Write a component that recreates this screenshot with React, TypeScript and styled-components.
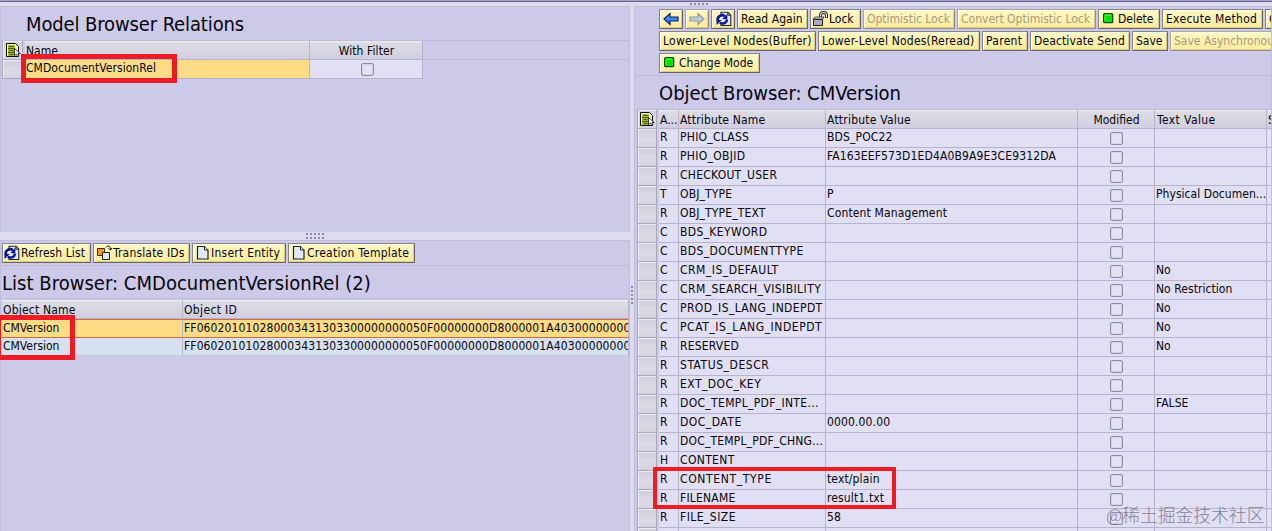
import React from "react";
import styled, { createGlobalStyle, css } from "styled-components";

const Global = createGlobalStyle`
  html, body { margin: 0; padding: 0; }
  body {
    width: 1272px; height: 531px; overflow: hidden; background: #cdc9e9; color: #05050c;
    font: 12px/14px "DejaVu Sans Condensed", "DejaVu Sans", sans-serif;
    font-stretch: condensed;
  }
  * { box-sizing: border-box; }
`;

const Screen = styled.div`
  position: relative;
  width: 1272px;
  height: 531px;
  display: flex;
  flex-direction: column;
  overflow: hidden;
`;
const TopEdge = styled.div`
  flex: none;
  height: 6px;
  border-top: 1px solid #a5a0cc;
  background: linear-gradient(#66648f 0 1px, #dddbed 1px 100%);
`;
const Columns = styled.div`
  flex: 1;
  min-height: 0;
  display: grid;
  grid-template-columns: 630px 4px 638px;
`;
const LeftSide = styled.div`
  display: grid;
  grid-template-rows: 226px 8px 291px;
  min-width: 0;
`;
const Pane = styled.section`
  border: 1px solid #c1bddc;
  border-width: 1px 1px 0 1px;
  min-width: 0;
  overflow: hidden;
`;
const HSplitter = styled.div`
  background: #dddbed;
  display: flex;
  align-items: center;
  justify-content: center;
`;
const VSplitter = styled(HSplitter)`
  padding-top: 52px;
`;
const DotGrid = styled.div<{ $w: number; $h: number }>`
  width: ${(p) => p.$w}px;
  height: ${(p) => p.$h}px;
  background: repeating-linear-gradient(90deg, transparent 0 2px, #dddbed 2px 4px),
    repeating-linear-gradient(#8f8cab 0 2px, #dddbed 2px 4px);
`;
const TopGrip = styled.div`
  position: absolute;
  left: 690px;
  top: 3px;
`;

const Title = styled.h1<{ $pad: string; $height: number; $track: number }>`
  margin: 0;
  height: ${(p) => p.$height}px;
  padding: ${(p) => p.$pad};
  font-size: 20px;
  line-height: 24px;
  font-weight: 400;
  letter-spacing: ${(p) => p.$track}px;
  white-space: nowrap;
  border-bottom: 1px solid #bfbbdb;
`;

const Toolbar = styled.div<{ $pad: string; $height: number }>`
  height: ${(p) => p.$height}px;
  padding: ${(p) => p.$pad};
  display: flex;
  flex-direction: column;
  gap: 2px;
  border-bottom: 1px solid #bfbbdb;
`;
const ButtonRow = styled.div`
  display: flex;
  gap: 2px;
`;
const Btn = styled.button<{ $w: number; $off?: boolean; $gap?: number; $left?: number; $track?: number }>`
  flex: none;
  width: ${(p) => p.$w}px;
  height: 20px;
  padding: 0 0 1px ${(p) => p.$left ?? 3}px;
  display: flex;
  align-items: center;
  gap: ${(p) => p.$gap ?? 1}px;
  font: inherit;
  letter-spacing: ${(p) => p.$track ?? 0}px;
  white-space: nowrap;
  overflow: hidden;
  border: 1px solid;
  border-color: #85848c #66656a #66656a #85848c;
  box-shadow: inset 1px 1px #fffce0, inset -1px -1px #d9cc85;
  background: linear-gradient(#fff8c6, #fdeb9c);
  color: #05050c;
  ${(p) =>
    p.$off &&
    css`
      color: #a29d80;
      border-color: #aaa89f #918f88 #918f88 #aaa89f;
    `}
  svg { flex: none; }
`;

const headFill = css`
  background: linear-gradient(#f1f0f5 0, #dcdbe4 2px, #d6d5e1 60%, #d0cee0);
`;
const Row = styled.div<{ $h: number }>`
  display: flex;
  height: ${(p) => p.$h}px;
`;
const Cell = styled.div<{
  $w: number;
  $head?: boolean;
  $bg?: string;
  $line?: string;
  $under?: string;
  $over?: string;
  $pl?: number;
  $pt?: number;
  $center?: boolean;
  $track?: number;
}>`
  flex: none;
  width: ${(p) => p.$w}px;
  height: 100%;
  padding: ${(p) => p.$pt ?? 1}px 0 0 ${(p) => p.$pl ?? 1}px;
  letter-spacing: ${(p) => p.$track ?? 0}px;
  white-space: nowrap;
  overflow: hidden;
  text-align: ${(p) => (p.$center ? "center" : "left")};
  background: ${(p) => p.$bg ?? "transparent"};
  border-right: 1px solid ${(p) => p.$line ?? "#b6b3cb"};
  border-bottom: 1px solid ${(p) => p.$under ?? "#b6b3cb"};
  ${(p) => p.$over && css`border-top: 1px solid ${p.$over};`}
  ${(p) => p.$head && headFill}
`;
const Selector = styled.div<{ $w: number }>`
  flex: none;
  width: ${(p) => p.$w}px;
  height: 100%;
  margin-right: 2px;
  border: 1px solid #a9a7bb;
  border-width: 0 1px 1px 1px;
  box-shadow: inset 1px 1px #eeedf4;
  background: linear-gradient(#cfcddc, #dbdae4 60%, #d4d3df);
  display: flex;
  align-items: center;
  justify-content: center;
`;
const Check = styled.span`
  display: inline-block;
  vertical-align: top;
  width: 13px;
  height: 13px;
  border: 1px solid #8f8da0;
  border-radius: 2px;
  background: #e3e1f2;
  box-shadow: inset 0 0 0 1px #d4d2e4;
`;
const LeftTable = styled.div<{ $mt?: number }>`
  margin: ${(p) => p.$mt ?? 0}px 0 0 1px;
`;
const AttrTable = styled.div`
  margin: 0 -10px 0 2px;
`;
const Rest = styled.div`
  flex: 1;
  border-bottom: 1px solid #bfbbdb;
`;

const Mark = styled.div<{ $x: number; $y: number; $w: number; $h: number; $t: number }>`
  position: absolute;
  left: ${(p) => p.$x}px;
  top: ${(p) => p.$y}px;
  width: ${(p) => p.$w}px;
  height: ${(p) => p.$h}px;
  border: ${(p) => p.$t}px solid #ed1c24;
`;
const Watermark = styled.div`
  position: absolute;
  left: 1106px;
  top: 501px;
  font: 300 17.8px/26px "Noto Sans CJK SC", sans-serif;
  color: rgba(95, 93, 112, 0.75);
  white-space: nowrap;
`;

const ListIcon = () => (
  <svg width="16" height="16" viewBox="0 0 16 16">
    <path d="M1.500 1.500h9l3 3v10h-12z" fill="#f5f3c0" stroke="#111" />
    <path d="M3 3h7v3H3zM3 7h7v3H3zM3 11h7v3H3z" fill="#9fbe2a" />
    <path d="M3 6.500h7M3 10.500h7M4.500 4.500h4M4.500 8.500h4M4.500 12.500h4" stroke="#4c5c00" />
    <path d="M9.500 6.500v7l2-1.500 1.200 2.500 1.300-.7-1-2.300h2.300z" fill="#fff" stroke="#111" strokeWidth=".8" />
  </svg>
);
const RefreshIcon = () => (
  <svg width="17" height="16" viewBox="0 0 17 16">
    <path d="M6 1.200h7l2.800 2.800v10.500H6z" fill="#dcebf5" stroke="#222" strokeWidth="1.100" />
    <path d="M12.800 1.500v2.700h2.700" fill="none" stroke="#222" />
    <circle cx="7.200" cy="8.200" r="3" fill="#eef4fb" />
    <path d="M2.800 9.500A4.500 4.300 0 0 1 10 5.200" fill="none" stroke="#0a159a" strokeWidth="2.700" />
    <path d="M12.300 3v5.200H7.200z" fill="#0a159a" />
    <path d="M12 8.500A4.600 4.300 0 0 1 4.800 11.800" fill="none" stroke="#0a159a" strokeWidth="2.500" />
    <path d="M1.500 14V9h5.300z" fill="#0a159a" />
  </svg>
);
const ArrowIcon = ({ right, fill, line }: { right?: boolean; fill: string; line: string }) => (
  <svg width="16" height="14" viewBox="0 0 16 14">
    <path
      d="M1 7L7 1.500V5h8v4H7v3.500z"
      fill={fill}
      stroke={line}
      strokeWidth="1.200"
      transform={right ? "translate(16 0) scale(-1 1)" : undefined}
    />
  </svg>
);
const LockIcon = () => (
  <svg width="17" height="16" viewBox="0 0 17 16">
    <path d="M8.500 8V4.500q0-3 3-3t3 3V7" fill="none" stroke="#222" strokeWidth="3" />
    <path d="M8.500 8V4.500q0-3 3-3t3 3V6.500" fill="none" stroke="#eee" strokeWidth="1.100" />
    <path d="M1 8l2-2h9l-1 2z" fill="#e9e9f2" stroke="#222" strokeWidth=".8" />
    <path d="M1.500 8.500h9v6h-9z" fill="#a9a8c8" stroke="#222" />
  </svg>
);
const GreenIcon = () => (
  <svg width="11" height="11" viewBox="0 0 11 11">
    <rect x=".7" y=".7" width="9" height="9" rx="1" fill="#08e100" stroke="#064b06" strokeWidth="1.300" />
    <path d="M2 8V2h6" fill="none" stroke="#55ff4c" />
  </svg>
);
const TranslateIcon = () => (
  <svg width="16" height="16" viewBox="0 0 16 16">
    <path d="M1.500 3.500h7v7h-7z" fill="#f59a0c" stroke="#3a2a10" />
    <path d="M6.500 7.500h7v7h-7z" fill="#d7ecf7" stroke="#222" />
    <path d="M10 2.500q1-2 3-1.500t1.500 4M12.500 3.500l2 1.500 1.300-2" fill="none" stroke="#222" />
  </svg>
);
const PageIcon = () => (
  <svg width="14" height="16" viewBox="0 0 14 16">
    <path d="M1.500 1.500h7l3.500 3.500V14h-10.500z" fill="#dcebf5" stroke="#222" strokeWidth="1.200" />
    <path d="M8.500 1.500V5h3.500" fill="#fff" stroke="#222" />
  </svg>
);

type Attr = { kind: string; name: string; value?: string; text?: string; track?: number };
const attrs: Attr[] = [
  { kind: "R", name: "PHIO_CLASS", value: "BDS_POC22", track: 0.25 },
  { kind: "R", name: "PHIO_OBJID", value: "FA163EEF573D1ED4A0B9A9E3CE9312DA", track: 0.3 },
  { kind: "R", name: "CHECKOUT_USER", track: 0.25 },
  { kind: "T", name: "OBJ_TYPE", value: "P", text: "Physical Documen...", track: 0.15 },
  { kind: "R", name: "OBJ_TYPE_TEXT", value: "Content Management", track: 0.15 },
  { kind: "C", name: "BDS_KEYWORD", track: 0.35 },
  { kind: "C", name: "BDS_DOCUMENTTYPE", track: 0.4 },
  { kind: "C", name: "CRM_IS_DEFAULT", text: "No", track: 0.5 },
  { kind: "C", name: "CRM_SEARCH_VISIBILITY", text: "No Restriction", track: 0.42 },
  { kind: "C", name: "PROD_IS_LANG_INDEPDT", text: "No", track: 0.38 },
  { kind: "C", name: "PCAT_IS_LANG_INDEPDT", text: "No", track: 0.55 },
  { kind: "R", name: "RESERVED", text: "No", track: 0.2 },
  { kind: "R", name: "STATUS_DESCR", track: 0.55 },
  { kind: "R", name: "EXT_DOC_KEY", track: 0.45 },
  { kind: "R", name: "DOC_TEMPL_PDF_INTE...", text: "FALSE", track: 0.33 },
  { kind: "R", name: "DOC_DATE", value: "0000.00.00", track: 0.5 },
  { kind: "R", name: "DOC_TEMPL_PDF_CHNG...", track: 0.18 },
  { kind: "H", name: "CONTENT", track: 0.35 },
  { kind: "R", name: "CONTENT_TYPE", value: "text/plain", track: 0.65 },
  { kind: "R", name: "FILENAME", value: "result1.txt", track: 0.2 },
  { kind: "R", name: "FILE_SIZE", value: "58", track: 0.45 },
];
const blankRow: Attr = { kind: "", name: "" };
const objectId =
  "FF0602010102800034313033" + "000000000" + "50F" + "00000000" + "D8000001A403" + "00000000";
const fill = "#e1dff3";
const amber = "#fddc85";
const rust = "#cf6c3c";

const RelationsPane = () => (
  <Pane>
    <Title $pad="5px 0 0 25px" $height={34} $track={-0.12}>Model Browser Relations</Title>
    <Row $h={19}>
      <LeftTable />
      <Selector $w={21}><ListIcon /></Selector>
      <Cell $w={285} $head $pt={3}>Name</Cell>
      <Cell $w={113} $head $pt={3} $center $track={0.1}>With Filter</Cell>
      <Rest />
    </Row>
    <Row $h={19}>
      <LeftTable />
      <Selector $w={21} />
      <Cell $w={285} $bg={amber} $track={0.05}>CMDocumentVersionRel</Cell>
      <Cell $w={113} $bg={fill} $pt={3} $pl={3} $center><Check /></Cell>
    </Row>
  </Pane>
);

const ListPane = () => (
  <Pane>
    <Toolbar $pad="2px 0 0 1px" $height={25}>
      <ButtonRow>
        <Btn $w={89} $left={0} $track={0.08}><RefreshIcon />Refresh List</Btn>
        <Btn $w={97} $left={2} $track={0.17}><TranslateIcon />Translate IDs</Btn>
        <Btn $w={94} $track={0.25}><PageIcon />Insert Entity</Btn>
        <Btn $w={127} $track={0.24}><PageIcon />Creation Template</Btn>
      </ButtonRow>
    </Toolbar>
    <Title $pad="5px 0 0 1px" $height={33} $track={0.03}>List Browser: CMDocumentVersionRel (2)</Title>
    <LeftTable $mt={1}>
      <Row $h={19}>
        <Cell $w={181} $head $pt={3} $track={0.2}>Object Name</Cell>
        <Cell $w={446} $head $pt={3} $track={0.35}>Object ID</Cell>
      </Row>
      <Row $h={19}>
        <Cell $w={181} $bg={amber} $over={rust} $under={rust}>CMVersion</Cell>
        <Cell $w={446} $bg={amber} $over={rust} $under={rust} $track={0.11}>{objectId}</Cell>
      </Row>
      <Row $h={18}>
        <Cell $w={181} $bg="#d6e0f1" $under="#c5cfe2">CMVersion</Cell>
        <Cell $w={446} $bg="#d6e0f1" $under="#c5cfe2" $track={0.11}>{objectId}</Cell>
      </Row>
    </LeftTable>
  </Pane>
);

const ObjectPane = () => (
  <Pane>
    <Toolbar $pad="2px 0 0 24px" $height={69}>
      <ButtonRow>
        <Btn $w={24}><ArrowIcon fill="#3c8cf0" line="#0b1c66" /></Btn>
        <Btn $w={24} $off><ArrowIcon right fill="#b8cfd8" line="#8d9a9c" /></Btn>
        <Btn $w={24}><RefreshIcon /></Btn>
        <Btn $w={71} $track={0.05}>Read Again</Btn>
        <Btn $w={51} $left={1} $gap={0}><LockIcon />Lock</Btn>
        <Btn $w={92} $off>Optimistic Lock</Btn>
        <Btn $w={139} $off>Convert Optimistic Lock</Btn>
        <Btn $w={62} $left={4} $gap={4}><GreenIcon />Delete</Btn>
        <Btn $w={101} $track={0.3}>Execute Method</Btn>
        <Btn $w={60}>Check</Btn>
      </ButtonRow>
      <ButtonRow>
        <Btn $w={157} $track={0.25}>Lower-Level Nodes(Buffer)</Btn>
        <Btn $w={162} $track={0.2}>Lower-Level Nodes(Reread)</Btn>
        <Btn $w={46} $track={0.3}>Parent</Btn>
        <Btn $w={100} $track={0.12}>Deactivate Send</Btn>
        <Btn $w={36}>Save</Btn>
        <Btn $w={130} $off>Save Asynchronously</Btn>
      </ButtonRow>
      <ButtonRow>
        <Btn $w={101} $left={4} $gap={4}><GreenIcon />Change Mode</Btn>
      </ButtonRow>
    </Toolbar>
    <Title $pad="5px 0 0 24px" $height={34} $track={-0.03}>Object Browser: CMVersion</Title>
    <AttrTable>
      <Row $h={19}>
        <Selector $w={20}><ListIcon /></Selector>
        <Cell $w={20} $head $pt={3}>A...</Cell>
        <Cell $w={147} $head $pt={3} $track={0.17}>Attribute Name</Cell>
        <Cell $w={252} $head $pt={3} $track={0.22}>Attribute Value</Cell>
        <Cell $w={77} $head $pt={3} $center>Modified</Cell>
        <Cell $w={112} $head $pt={3} $pl={2} $track={0.4}>Text Value</Cell>
        <Cell $w={30} $head $pt={3}>S</Cell>
      </Row>
      {[...attrs, blankRow].map((a, i) => (
        <Row $h={19} key={i}>
          <Selector $w={20} />
          <Cell $w={20} $bg={fill}>{a.kind}</Cell>
          <Cell $w={147} $bg={fill} $track={a.track}>{a.name}</Cell>
          <Cell $w={252} $bg={fill} $track={0.14}>{a.value}</Cell>
          <Cell $w={77} $bg={fill} $pt={3} $center>{a.name && <Check />}</Cell>
          <Cell $w={112} $bg={fill} $track={0.05}>{a.text}</Cell>
          <Cell $w={30} $bg={fill} />
        </Row>
      ))}
    </AttrTable>
  </Pane>
);

export default function App() {
  return (
    <Screen>
      <Global />
      <TopEdge />
      <Columns>
        <LeftSide>
          <RelationsPane />
          <HSplitter><DotGrid $w={18} $h={6} /></HSplitter>
          <ListPane />
        </LeftSide>
        <VSplitter><DotGrid $w={2} $h={18} /></VSplitter>
        <ObjectPane />
      </Columns>
      <TopGrip><DotGrid $w={20} $h={2} /></TopGrip>
      <Mark $x={21} $y={54} $w={156} $h={29} $t={5} />
      <Mark $x={-4} $y={315} $w={79} $h={45} $t={5} />
      <Mark $x={653} $y={467} $w={243} $h={42} $t={4} />
      <Watermark>@稀土掘金技术社区</Watermark>
    </Screen>
  );
}
